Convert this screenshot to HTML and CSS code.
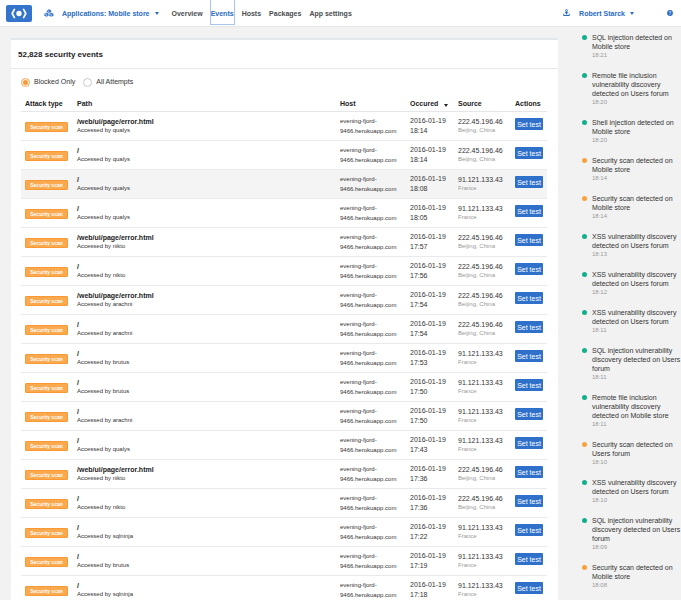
FILE: index.html
```html
<!DOCTYPE html>
<html lang="en">
<head>
<meta charset="utf-8">
<title>Security events</title>
<link rel="stylesheet" href="styles.css">
</head>
<body>
<header class="topbar">
  <a class="logo" href="#" aria-label="Home">
    <svg viewBox="0 0 26 17" width="26" height="17"><path d="M8.4 4.4 6.2 8.5l2.2 4.1M17.6 4.4l2.2 4.1-2.2 4.1" fill="none" stroke="#fff" stroke-width="1.7" stroke-linecap="round" stroke-linejoin="round"/><circle cx="13" cy="8.5" r="2.7" fill="#fff"/></svg>
  </a>
  <a class="app" href="#">
    <svg class="cubes" viewBox="0 0 10 8" width="10" height="8"><g fill="#3a78c9"><path d="M4.9.3 7.1 1.3v2L4.9 4.3 2.8 3.3v-2zM2.5 3.7l2.1 1v2l-2.1 1-2.2-1v-2zM7.3 3.7l2.2 1v2l-2.2 1-2.1-1v-2z"/></g><path d="M3 1.5l1.9.8v1.6M.6 4.9l1.9.8v1.6M5.4 4.9l1.9.8v1.6" fill="none" stroke="#fff" stroke-width=".5"/></svg>
    <span>Applications: Mobile store</span><i class="caret"></i>
  </a>
  <nav class="nav">
    <a href="#">Overview</a>
    <a class="current" href="#">Events</a>
    <a href="#">Hosts</a>
    <a href="#">Packages</a>
    <a href="#">App settings</a>
  </nav>
  <div class="account">
    <a href="#" aria-label="Integrations"><svg viewBox="0 0 7 8" width="7" height="8"><g fill="none" stroke="#2a6bc4"><circle cx="3.5" cy="1.6" r="1" stroke-width=".9"/><path d="M3.5 2.6v3M1.8 3.8h3.4" stroke-width="1.1"/><path d="M.7 4.8v1.7h5.6V4.8" stroke-width="1"/></g></svg></a>
    <a class="user" href="#"><span>Robert Starck</span><i class="caret"></i></a>
    <a href="#" aria-label="Help"><svg viewBox="0 0 6 6" width="6" height="6"><circle cx="3" cy="3" r="2.9" fill="#2a6bc4"/><path d="M2.1 2.4c0-1.2 1.8-1.2 1.8-.1 0 .7-.9.7-.9 1.3M3 4.2v.6" fill="none" stroke="#fff" stroke-width=".7"/></svg></a>
  </div>
</header>
<div class="layout">
  <main class="panel">
    <h1>52,828 security events</h1>
    <form class="filters">
      <label><input type="radio" name="filter" checked>Blocked Only</label>
      <label><input type="radio" name="filter">All Attempts</label>
    </form>
    <table class="events">
      <colgroup><col class="c-type"><col><col class="c-host"><col class="c-date"><col class="c-source"><col class="c-action"></colgroup>
      <thead><tr><th>Attack type</th><th>Path</th><th>Host</th><th><span class="sorted">Occured<i class="caret"></i></span></th><th>Source</th><th>Actions</th></tr></thead>
      <tbody id="rows"></tbody>
    </table>
  </main>
  <aside>
    <ul class="feed" id="feed"></ul>
  </aside>
</div>
<script src="app.js"></script>
</body>
</html>
```
FILE: styles.css
```css
* { box-sizing: border-box; }
body {
  margin: 0;
  min-height: 100vh;
  overflow: hidden;
  background: #f2f2f2;
  color: #333;
  font: 7px/9px "Liberation Sans", Arial, sans-serif;
}
a { color: #2a6bc4; text-decoration: none; }
svg { display: block; }
.caret {
  border: 2px solid transparent;
  border-top: 3px solid currentColor;
  border-bottom: 0;
}

.topbar {
  display: flex;
  align-items: center;
  height: 26px;
  padding: 0 8px 0 6px;
  background: #fff;
  box-shadow: 0 1px 1px #e6e8ea;
  font-weight: bold;
}
.logo { border-radius: 2px; background: #3474cc; }
.app, .user { display: flex; align-items: center; gap: 5px; }
.app { margin-left: 12px; }
.cubes { margin-right: 3px; }
.nav { display: flex; height: 24px; margin-left: 13px; align-self: flex-start; gap: 8px; }
.nav a { display: flex; align-items: center; padding-top: 2px; color: #4a4d50; }
.nav .current { color: #2a6bc4; outline: 1px solid #a9c5ee; }
.account { display: flex; align-items: center; gap: 9px; margin-left: auto; }
.user { margin-right: 24px; }

.layout { display: flex; gap: 24px; padding-left: 11px; align-items: flex-start; }
.panel {
  flex: 1;
  margin-top: 12px;
  background: #fff;
  border-top: 2px solid #e2e7ec;
}
h1 {
  margin: 0;
  padding: 9px 7px 7px;
  border-bottom: 1px solid #e6eaed;
  color: #222;
  font-size: 8px;
  line-height: 12px;
}
.filters { display: flex; gap: 8px; padding: 8px 10px 0; }
.filters label { display: flex; align-items: center; gap: 4px; line-height: 10px; }
.filters input {
  appearance: none;
  width: 9px;
  height: 9px;
  margin: 0;
  border: 1px solid #c8c8c8;
  border-radius: 50%;
  background: #fff;
}
.filters input:checked { border-color: #f6b873; background: #f6993a; box-shadow: inset 0 0 0 1px #fff; }

.events {
  width: calc(100% - 21px);
  margin: 7px 0 0 10px;
  border-collapse: collapse;
  table-layout: fixed;
}
.c-type { width: 52px; }
.c-host { width: 70px; }
.c-date { width: 48px; }
.c-source { width: 57px; }
.c-action { width: 36px; }
th {
  padding: 5px 0 3px 4px;
  border-bottom: 1px solid #e4e6e8;
  color: #222;
  line-height: 9px;
  text-align: left;
}
.sorted { display: flex; align-items: center; justify-content: space-between; padding-right: 6px; }
.sorted .caret { margin-top: 4px; }
td {
  height: 29px;
  padding: 0 0 0 4px;
  border-bottom: 1px solid #e8eaeb;
  vertical-align: middle;
  white-space: nowrap;
}
tr.hover { background: #f4f4f4; }
td b { display: block; color: #222; }
td small { display: block; font-size: 6px; line-height: 9px; }
td .place { color: #999; }
.host { white-space: normal; font-size: 6px; line-height: 10px; }
.date { line-height: 10px; }
.badge {
  display: block;
  width: 43px;
  margin-top: 2px;
  border: 1px solid #f79a35;
  border-radius: 1px;
  background: #faa94e;
  color: #fff;
  font-size: 5px;
  font-weight: bold;
  line-height: 8px;
  text-align: center;
}
button {
  display: block;
  width: 28px;
  height: 12px;
  margin: 0 0 4px;
  padding: 0;
  border: 0;
  border-radius: 1px;
  background: #2f70ca;
  color: #fff;
  font: inherit;
  text-align: center;
}

aside { width: 99px; }
.feed { margin: 0; padding: 7px 0 0; list-style: none; }
.feed li { display: flex; gap: 5px; padding-bottom: 11px; }
.feed li::before {
  content: "";
  flex: none;
  width: 5px;
  height: 5px;
  margin-top: 2px;
  border-radius: 50%;
  background: #10b08b;
}
.feed .scan::before { background: #f9a23c; }
.feed p { margin: 0; }
.feed time { display: block; color: #999; font-size: 6px; }
```
FILE: app.js
```js
const cn = ["222.45.196.46", "Beijing, China"];
const fr = ["91.121.133.43", "France"];
const page = "/web/ui/page/error.html";
const events = [
  [page, "qualys", "18:14", cn], ["/", "qualys", "18:14", cn],
  ["/", "qualys", "18:08", fr], ["/", "qualys", "18:05", fr],
  [page, "nikto", "17:57", cn], ["/", "nikto", "17:56", cn],
  [page, "arachni", "17:54", cn], ["/", "arachni", "17:54", cn],
  ["/", "brutus", "17:53", fr], ["/", "brutus", "17:50", fr],
  ["/", "arachni", "17:50", fr], ["/", "qualys", "17:43", fr],
  [page, "nikto", "17:36", cn], ["/", "nikto", "17:36", cn],
  ["/", "sqlninja", "17:22", fr], ["/", "brutus", "17:19", fr],
  ["/", "sqlninja", "17:18", fr]
];
document.getElementById("rows").innerHTML = events.map(([path, tool, time, src], i) => `
<tr class="${i === 2 ? "hover" : ""}">
<td><span class="badge">Security scan</span></td>
<td><b>${path}</b><small>Accessed by ${tool}</small></td>
<td class="host">evening-fjord-<br>9466.herokuapp.com</td>
<td class="date">2016-01-19<br>${time}</td>
<td>${src[0]}<small class="place">${src[1]}</small></td>
<td><button type="button">Set test</button></td>
</tr>`).join("");

const feed = [
  ["SQL injection detected on Mobile store", "18:21"],
  ["Remote file inclusion vulnerability discovery detected on Users forum", "18:20"],
  ["Shell injection detected on Mobile store", "18:20"],
  ["Security scan detected on Mobile store", "18:14"],
  ["Security scan detected on Mobile store", "18:14"],
  ["XSS vulnerability discovery detected on Users forum", "18:13"],
  ["XSS vulnerability discovery detected on Users forum", "18:12"],
  ["XSS vulnerability discovery detected on Users forum", "18:11"],
  ["SQL injection vulnerability discovery detected on Users forum", "18:11"],
  ["Remote file inclusion vulnerability discovery detected on Mobile store", "18:11"],
  ["Security scan detected on Users forum", "18:10"],
  ["XSS vulnerability discovery detected on Users forum", "18:10"],
  ["SQL injection vulnerability discovery detected on Users forum", "18:09"],
  ["Security scan detected on Mobile store", "18:08"]
];
document.getElementById("feed").innerHTML = feed.map(([text, time]) =>
  `<li class="${text.startsWith("Security") ? "scan" : ""}"><p>${text}<time>${time}</time></p></li>`).join("");
```
